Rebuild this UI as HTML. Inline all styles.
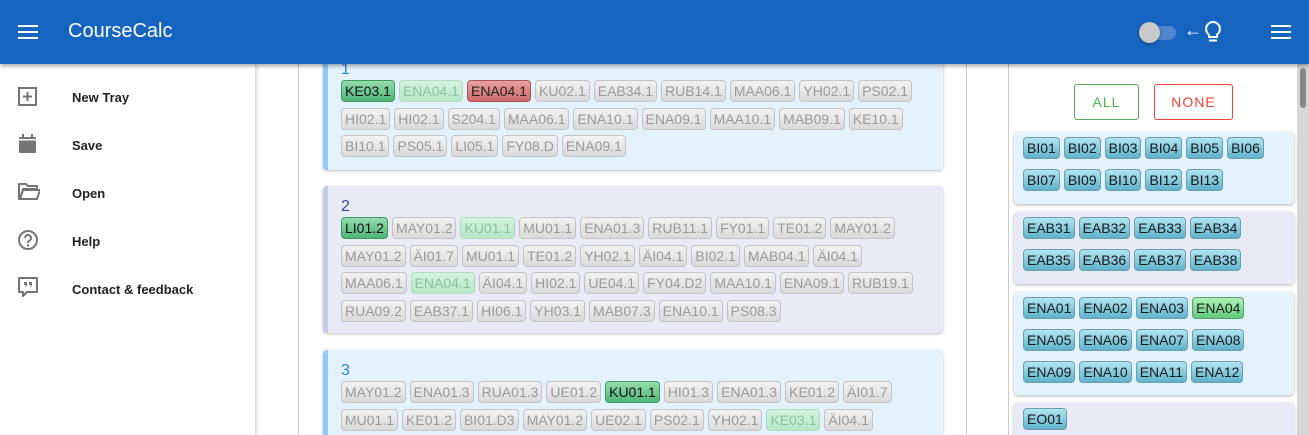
<!DOCTYPE html>
<html style="overflow:hidden;height:435px"><head><meta charset="utf-8"><style>
*{box-sizing:border-box;margin:0;padding:0}
body{width:1309px;height:435px;overflow:hidden;font-family:"Liberation Sans",sans-serif;background:#fff;position:relative}
.hdr{position:absolute;left:0;top:0;width:1309px;height:64px;background:#1565c0;box-shadow:0 2px 4px rgba(0,0,0,.35);z-index:5}
.hdr .t{position:absolute;left:68px;top:20px;color:#fff;font-size:20px}
.drawer{position:absolute;left:0;top:64px;width:256px;height:371px;background:#fff;border-right:1px solid #ddd;box-shadow:1px 0 4px rgba(0,0,0,.15);z-index:3}
.mi{position:absolute;left:72px;font-size:13px;font-weight:bold;color:#222}
.ic{position:absolute;left:18px}
.col{position:absolute;left:298px;top:64px;width:669px;height:371px;border-left:1px solid #ccc;border-right:1px solid #ccc;background:#fff;overflow:hidden}
.card{position:absolute;left:24px;width:620px;border-radius:4px;border-left:5px solid #90caf9;background:#e3f2fd;box-shadow:0 1px 3px rgba(0,0,0,.25);padding:0 0 0 13px}
.card.b{background:#e8eaf6;border-left-color:#c5cae9}
.num{font-size:16px;height:21px;line-height:21px;color:#1e88e5}
.card.b .num{color:#3949ab}
.row{height:27.5px;white-space:nowrap}
.tg{display:inline-block;height:22px;line-height:20px;font-size:14px;padding:0 3px;margin-right:4px;border:1px solid #c4c4c4;border-radius:4px;background:linear-gradient(#f2f2f2,#dadada);color:#9a9a9a}
.tg.g{background:linear-gradient(#96dcae,#4fb577);border-color:#3f9a60;color:#111}
.tg.lg{background:linear-gradient(#d3f3de,#b7e8c7);border-color:#b0dcbf;color:#8fbf9f}
.tg.r{background:linear-gradient(#eba0a0,#cd6a6a);border-color:#a55;color:#222}
.rp{position:absolute;left:1008px;top:64px;width:289px;height:371px;border-left:1px solid #ccc;background:#fff;overflow:hidden}
.sb{position:absolute;left:1297px;top:64px;width:12px;height:371px;background:#d6d6d6}
.sb i{position:absolute;left:3px;top:4px;width:6px;height:40px;background:#888;border-radius:3px}
.btn{position:absolute;top:20px;height:36px;border-radius:3px;font-size:14px;letter-spacing:1px;text-align:center;line-height:34px}
.grp{position:absolute;left:5px;width:280px;background:#e3f2fd;border-radius:4px;box-shadow:0 1px 3px rgba(0,0,0,.3);padding:5px 0 0 9px}
.grp.b{background:#e8eaf6}
.grp .r2{height:32px;white-space:nowrap}
.ch{display:inline-block;height:22px;line-height:20px;font-size:14px;padding:0 3px;margin-right:4px;border:1px solid #6a9fae;border-radius:4px;background:linear-gradient(#b3e5f2,#5fb2cb);color:#1a1a1a}
.ch.g{background:linear-gradient(#b0f0b8,#5fcb79);border-color:#5aa06a}
</style></head><body>
<div class="hdr">
<svg style="position:absolute;left:18px;top:25px" width="20" height="14"><rect y="0" width="20" height="2" fill="#fff"/><rect y="6" width="20" height="2" fill="#fff"/><rect y="12" width="20" height="2" fill="#fff"/></svg>
<div class="t">CourseCalc</div>
<div style="position:absolute;left:1142px;top:26px;width:34px;height:14px;border-radius:7px;background:#4f86cf"></div>
<div style="position:absolute;left:1139px;top:22px;width:21px;height:21px;border-radius:50%;background:#c9c9c9;box-shadow:0 1px 3px rgba(0,0,0,.4)"></div>
<div style="position:absolute;left:1184px;top:20px;color:#fff;font-size:18px">←</div>
<svg style="position:absolute;left:1203px;top:20px" width="20" height="24" viewBox="0 0 20 24"><path d="M10 2a7 7 0 0 0-4 12.7V17h8v-2.3A7 7 0 0 0 10 2z" fill="none" stroke="#fff" stroke-width="2"/><rect x="6" y="19.5" width="8" height="2" fill="#fff"/></svg>
<svg style="position:absolute;left:1271px;top:25px" width="20" height="14"><rect y="0" width="20" height="2" fill="#fff"/><rect y="6" width="20" height="2" fill="#fff"/><rect y="12" width="20" height="2" fill="#fff"/></svg>
</div>
<div class="drawer">
<svg class="ic" style="top:23px" width="20" height="20" viewBox="0 0 20 20"><rect x="1" y="1" width="17" height="17" fill="none" stroke="#757575" stroke-width="2"/><path d="M9.5 5v9M5 9.5h9" stroke="#757575" stroke-width="2"/></svg>
<div class="mi" style="top:26px">New Tray</div>
<svg class="ic" style="top:70px" width="20" height="20" viewBox="0 0 20 20"><rect x="1" y="3" width="17" height="16" rx="1" fill="#757575"/><rect x="4" y="0" width="2" height="4" fill="#757575"/><rect x="13" y="0" width="2" height="4" fill="#757575"/><rect x="1" y="5" width="17" height="1.5" fill="#fff"/></svg>
<div class="mi" style="top:74px">Save</div>
<svg class="ic" style="top:119px" width="22" height="18" viewBox="0 0 22 18"><path d="M1 1h7l2 2h9v3H5L2 16H1z M2 16l3-9h17l-3 9z" fill="none" stroke="#757575" stroke-width="2" stroke-linejoin="round"/></svg>
<div class="mi" style="top:122px">Open</div>
<svg class="ic" style="top:166px" width="22" height="22" viewBox="0 0 22 22"><circle cx="10" cy="10" r="9" fill="none" stroke="#757575" stroke-width="2"/><path d="M7 8a3 3 0 1 1 4 2.8c-1 .5-1 1-1 2.2" fill="none" stroke="#757575" stroke-width="2"/><circle cx="10" cy="15.5" r="1.2" fill="#757575"/></svg>
<div class="mi" style="top:170px">Help</div>
<svg class="ic" style="top:213px" width="22" height="22" viewBox="0 0 22 22"><path d="M1 1h18v14H9l-4 4v-4H1z" fill="none" stroke="#757575" stroke-width="2" stroke-linejoin="round"/><path d="M6 5h3v3l-1 2H7l1-2H6zM11 5h3v3l-1 2h-1l1-2h-2z" fill="#757575"/></svg>
<div class="mi" style="top:218px">Contact &amp; feedback</div>
</div>
<div class="col">
<div class="card" style="top:-10px;height:116px;padding-top:5px">
<div class="num">1</div>
<div class="row"><span class="tg g">KE03.1</span><span class="tg lg">ENA04.1</span><span class="tg r">ENA04.1</span><span class="tg">KU02.1</span><span class="tg">EAB34.1</span><span class="tg">RUB14.1</span><span class="tg">MAA06.1</span><span class="tg">YH02.1</span><span class="tg">PS02.1</span></div>
<div class="row"><span class="tg">HI02.1</span><span class="tg">HI02.1</span><span class="tg">S204.1</span><span class="tg">MAA06.1</span><span class="tg">ENA10.1</span><span class="tg">ENA09.1</span><span class="tg">MAA10.1</span><span class="tg">MAB09.1</span><span class="tg">KE10.1</span></div>
<div class="row"><span class="tg">BI10.1</span><span class="tg">PS05.1</span><span class="tg">LI05.1</span><span class="tg">FY08.D</span><span class="tg">ENA09.1</span></div>
</div>
<div class="card b" style="top:122px;height:147px;padding-top:10px">
<div class="num">2</div>
<div class="row"><span class="tg g">LI01.2</span><span class="tg">MAY01.2</span><span class="tg lg">KU01.1</span><span class="tg">MU01.1</span><span class="tg">ENA01.3</span><span class="tg">RUB11.1</span><span class="tg">FY01.1</span><span class="tg">TE01.2</span><span class="tg">MAY01.2</span></div>
<div class="row"><span class="tg">MAY01.2</span><span class="tg">ÄI01.7</span><span class="tg">MU01.1</span><span class="tg">TE01.2</span><span class="tg">YH02.1</span><span class="tg">ÄI04.1</span><span class="tg">BI02.1</span><span class="tg">MAB04.1</span><span class="tg">ÄI04.1</span></div>
<div class="row"><span class="tg">MAA06.1</span><span class="tg lg">ENA04.1</span><span class="tg">ÄI04.1</span><span class="tg">HI02.1</span><span class="tg">UE04.1</span><span class="tg">FY04.D2</span><span class="tg">MAA10.1</span><span class="tg">ENA09.1</span><span class="tg">RUB19.1</span></div>
<div class="row"><span class="tg">RUA09.2</span><span class="tg">EAB37.1</span><span class="tg">HI06.1</span><span class="tg">YH03.1</span><span class="tg">MAB07.3</span><span class="tg">ENA10.1</span><span class="tg">PS08.3</span></div>
</div>
<div class="card" style="top:286px;height:120px;padding-top:10px">
<div class="num">3</div>
<div class="row"><span class="tg">MAY01.2</span><span class="tg">ENA01.3</span><span class="tg">RUA01.3</span><span class="tg">UE01.2</span><span class="tg g">KU01.1</span><span class="tg">HI01.3</span><span class="tg">ENA01.3</span><span class="tg">KE01.2</span><span class="tg">ÄI01.7</span></div>
<div class="row"><span class="tg">MU01.1</span><span class="tg">KE01.2</span><span class="tg">BI01.D3</span><span class="tg">MAY01.2</span><span class="tg">UE02.1</span><span class="tg">PS02.1</span><span class="tg">YH02.1</span><span class="tg lg">KE03.1</span><span class="tg">ÄI04.1</span></div>
</div>
</div>
<div class="rp">
<div class="btn" style="left:65px;width:65px;border:1px solid #4caf50;color:#4caf50">ALL</div>
<div class="btn" style="left:145px;width:79px;border:1px solid #f44336;color:#f44336">NONE</div>
<div class="grp" style="top:68px;height:72px"><div class="r2"><span class="ch">BI01</span><span class="ch">BI02</span><span class="ch">BI03</span><span class="ch">BI04</span><span class="ch">BI05</span><span class="ch">BI06</span></div><div class="r2"><span class="ch">BI07</span><span class="ch">BI09</span><span class="ch">BI10</span><span class="ch">BI12</span><span class="ch">BI13</span></div></div>
<div class="grp b" style="top:148px;height:72px"><div class="r2"><span class="ch">EAB31</span><span class="ch">EAB32</span><span class="ch">EAB33</span><span class="ch">EAB34</span></div><div class="r2"><span class="ch">EAB35</span><span class="ch">EAB36</span><span class="ch">EAB37</span><span class="ch">EAB38</span></div></div>
<div class="grp" style="top:228px;height:103px"><div class="r2"><span class="ch">ENA01</span><span class="ch">ENA02</span><span class="ch">ENA03</span><span class="ch g">ENA04</span></div><div class="r2"><span class="ch">ENA05</span><span class="ch">ENA06</span><span class="ch">ENA07</span><span class="ch">ENA08</span></div><div class="r2"><span class="ch">ENA09</span><span class="ch">ENA10</span><span class="ch">ENA11</span><span class="ch">ENA12</span></div></div>
<div class="grp b" style="top:339px;height:60px"><div class="r2"><span class="ch">EO01</span></div></div>
</div>
<div class="sb"><i></i></div>
</body></html>
